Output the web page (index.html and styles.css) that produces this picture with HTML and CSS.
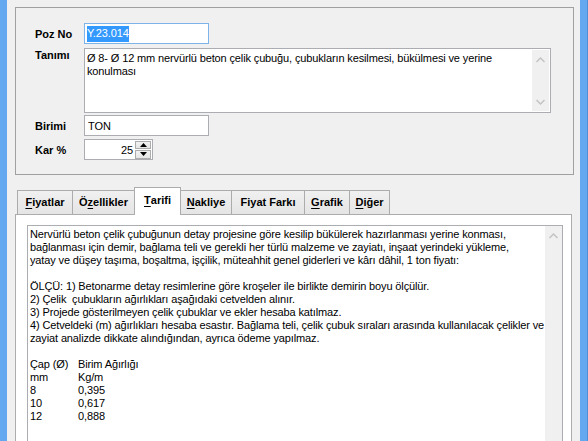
FILE: index.html
```html
<!DOCTYPE html>
<html lang="tr">
<head>
<meta charset="utf-8">
<title>Poz</title>
<link rel="stylesheet" href="styles.css">
</head>
<body>
<div class="window">
  <div class="edge edge-left"></div>
  <div class="client">
    <div class="group">
      <div class="form">
        <div class="label row-poz">Poz No</div>
        <div class="field row-poz"><div class="input input-poz focused"><span class="sel">Y.23.014</span></div></div>

        <div class="label label-top row-tanim">Tanımı</div>
        <div class="field row-tanim">
          <div class="memo memo-tanim">
            <div class="memo-text">Ø 8- Ø 12 mm nervürlü beton çelik çubuğu, çubukların kesilmesi, bükülmesi ve yerine<br>konulması</div>
            <div class="vscroll">
              <svg class="arrow" width="9" height="6" viewBox="0 0 9 6"><path d="M0.5 5 L4.5 1 L8.5 5" fill="none" stroke="#c2c2c2" stroke-width="1.4"/></svg>
              <svg class="arrow" width="9" height="6" viewBox="0 0 9 6"><path d="M0.5 1 L4.5 5 L8.5 1" fill="none" stroke="#c2c2c2" stroke-width="1.4"/></svg>
            </div>
          </div>
        </div>

        <div class="label row-birim">Birimi</div>
        <div class="field row-birim"><div class="input input-birim">TON</div></div>

        <div class="label row-kar">Kar %</div>
        <div class="field row-kar">
          <div class="input input-kar">
            <span class="num">25</span>
            <div class="spin">
              <div class="spin-btn"><svg width="7" height="4" viewBox="0 0 7 4"><path d="M0 4 L3.5 0 L7 4 Z" fill="#000"/></svg></div>
              <div class="spin-btn"><svg width="7" height="4" viewBox="0 0 7 4"><path d="M0 0 L7 0 L3.5 4 Z" fill="#000"/></svg></div>
            </div>
          </div>
        </div>
      </div>
    </div>

    <div class="tabs">
      <div class="tabstrip">
        <div class="tab tab-fiyatlar"><u>F</u>iyatlar</div>
        <div class="tab tab-ozellik">Ö<u>z</u>ellikler</div>
        <div class="tab tab-tarifi active"><u>T</u>arifi</div>
        <div class="tab tab-nakliye"><u>N</u>akliye</div>
        <div class="tab tab-fark">Fiyat Farkı</div>
        <div class="tab tab-grafik"><u>G</u>rafik</div>
        <div class="tab tab-diger last"><u>D</u>iğer</div>
      </div>
      <div class="tabpanel">
        <div class="memo memo-tarif">
          <div class="memo-text lines">
            <div>Nervürlü beton çelik çubuğunun detay projesine göre kesilip bükülerek hazırlanması yerine konması,</div>
            <div>bağlanması için demir, bağlama teli ve gerekli her türlü malzeme ve zayiatı, inşaat yerindeki yükleme,</div>
            <div>yatay ve düşey taşıma, boşaltma, işçilik, müteahhit genel giderleri ve kârı dâhil, 1 ton fiyatı:</div>
            <div class="blank"></div>
            <div>ÖLÇÜ: 1) Betonarme detay resimlerine göre kroşeler ile birlikte demirin boyu ölçülür.</div>
            <div>2) Çelik&nbsp; çubukların ağırlıkları aşağıdaki cetvelden alınır.</div>
            <div>3) Projede gösterilmeyen çelik çubuklar ve ekler hesaba katılmaz.</div>
            <div>4) Cetveldeki (m) ağırlıkları hesaba esastır. Bağlama teli, çelik çubuk sıraları arasında kullanılacak çelikler ve</div>
            <div>zayiat analizde dikkate alındığından, ayrıca ödeme yapılmaz.</div>
            <div class="blank"></div>
            <div class="trow"><span class="tcol">Çap (Ø)</span><span>Birim Ağırlığı</span></div>
            <div class="trow"><span class="tcol">mm</span><span>Kg/m</span></div>
            <div class="trow"><span class="tcol">8</span><span>0,395</span></div>
            <div class="trow"><span class="tcol">10</span><span>0,617</span></div>
            <div class="trow"><span class="tcol">12</span><span>0,888</span></div>
          </div>
          <div class="vscroll vscroll-tall">
            <svg class="arrow" width="9" height="6" viewBox="0 0 9 6"><path d="M0.5 5 L4.5 1 L8.5 5" fill="none" stroke="#c2c2c2" stroke-width="1.4"/></svg>
          </div>
        </div>
      </div>
    </div>
  </div>
  <div class="edge edge-right"></div>
</div>
</body>
</html>
```
FILE: styles.css
```css
* { box-sizing: border-box; }
html, body { margin: 0; padding: 0; }
body {
  width: 588px;
  height: 441px;
  overflow: hidden;
  background: #f0f0f0;
  font-family: "Liberation Sans", Arial, sans-serif;
  font-size: 11px;
  color: #000;
}
.window {
  display: flex;
  height: 441px;
  overflow: hidden;
}
.edge {
  background: #64a8f0;
  flex: none;
}
.edge-left { width: 7px; }
.edge-right { width: 8px; border-right: 1px solid #4f8fd8; }
.client {
  width: 573px;
  flex: none;
  display: flex;
  flex-direction: column;
  overflow: hidden;
}
.client > * { flex: none; }
.group {
  margin: 7px 0 0 8px;
  width: 559px;
  height: 168px;
  border: 1px solid #a0a0a0;
  padding: 15px 0 0 19px;
}
.form {
  display: grid;
  grid-template-columns: 49px auto;
  align-items: start;
}
.row-tanim { margin-top: 4px; }
.row-birim { margin-top: 2px; }
.row-kar { margin-top: 3px; }
.label {
  font-weight: bold;
  height: 21px;
  display: flex;
  align-items: center;
}
.label-top { align-items: flex-start; padding-top: 1px; }
.input {
  height: 21px;
  border: 1px solid #abadb3;
  background: #fff;
  display: flex;
  align-items: center;
  padding: 0 2px;
  letter-spacing: -0.1px;
}
.focused { border-color: #7eb4ea; }
.input-poz { width: 125px; }
.input-birim { width: 125px; padding-left: 3px; }
.input-kar { width: 69px; padding: 0 1px 0 0; justify-content: flex-end; }
.sel {
  background: #3399ff;
  color: #fff;
  padding: 1px 0 2px;
  line-height: 13px;
}
.num { margin-right: 2px; }
.spin {
  display: flex;
  flex-direction: column;
  gap: 1px;
  width: 16px;
  height: 18px;
}
.spin-btn {
  flex: 1;
  border: 1px solid #acacac;
  background: linear-gradient(#f2f2f2, #e5e5e5);
  display: flex;
  align-items: center;
  justify-content: center;
}
.memo {
  border: 1px solid #abadb3;
  background: #fff;
  display: flex;
  justify-content: space-between;
}
.memo-tanim { width: 467px; height: 65px; padding-right: 1px; }
.memo-text {
  padding: 2px 0 0 2px;
  line-height: 13px;
  white-space: nowrap;
  letter-spacing: -0.13px;
}
.memo-tanim .memo-text { padding: 3px 0 0 2px; }
.vscroll {
  width: 17px;
  background: #f0f0f0;
  margin: 1px 0;
  display: flex;
  flex-direction: column;
  align-items: center;
  justify-content: space-between;
  padding: 7px 0 6px;
}
.vscroll-tall { justify-content: flex-start; margin: 0; height: 300px; }

.tabs {
  margin: 11px 0 0 8px;
  width: 557px;
}
.tabstrip {
  display: flex;
  align-items: flex-end;
  padding-left: 2px;
  height: 28px;
}
.tab {
  height: 24px;
  border: 1px solid #acacac;
  border-right: none;
  border-bottom: none;
  background: linear-gradient(#f0f0f0, #e5e5e5);
  font-weight: bold;
  display: flex;
  align-items: center;
  justify-content: center;
  padding-bottom: 1px;
  white-space: nowrap;
}
.tab.last { border-right: 1px solid #acacac; }
.tab.active {
  height: 28px;
  background: #fff;
  border-right: 1px solid #acacac;
  margin-bottom: -1px;
  position: relative;
  z-index: 1;
  padding-bottom: 4px;
}
.tab.active + .tab { border-left: none; }
.tab-fiyatlar { width: 55px; }
.tab-ozellik { width: 62px; }
.tab-tarifi { width: 47px; }
.tab-nakliye { width: 50px; }
.tab-fark { width: 73px; }
.tab-grafik { width: 45px; }
.tab-diger { width: 41px; }
.tab u { text-decoration-thickness: 1px; text-underline-offset: 2px; }

.tabpanel {
  border: 1px solid #acacac;
  border-bottom: none;
  background: #fff;
  height: 240px;
  padding: 10px 0 0 11px;
}
.memo-tarif {
  width: 536px;
  height: 240px;
  border-bottom: none;
}
.lines > div { height: 13px; }
.trow { display: flex; }
.tcol { width: 48px; }
```
